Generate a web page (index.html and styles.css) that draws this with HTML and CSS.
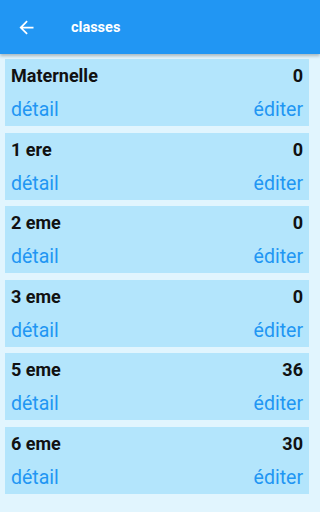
FILE: index.html
```html
<!DOCTYPE html>
<html lang="fr">
<head>
<meta charset="utf-8">
<title>classes</title>
<link rel="stylesheet" href="styles.css">
</head>
<body>
<header class="appbar">
  <svg class="back" viewBox="0 0 24 24" width="21" height="21" aria-hidden="true"><path fill="#fff" d="M20 11H7.83l5.59-5.59L12 4l-8 8 8 8 1.41-1.41L7.83 13H20v-2z"/></svg>
  <span class="title">classes</span>
</header>
<main class="list">
  <section class="card"><div class="row top"><span>Maternelle</span><span>0</span></div><div class="row links"><span>détail</span><span>éditer</span></div></section>
  <section class="card"><div class="row top"><span>1 ere</span><span>0</span></div><div class="row links"><span>détail</span><span>éditer</span></div></section>
  <section class="card"><div class="row top"><span>2 eme</span><span>0</span></div><div class="row links"><span>détail</span><span>éditer</span></div></section>
  <section class="card"><div class="row top"><span>3 eme</span><span>0</span></div><div class="row links"><span>détail</span><span>éditer</span></div></section>
  <section class="card"><div class="row top"><span>5 eme</span><span>36</span></div><div class="row links"><span>détail</span><span>éditer</span></div></section>
  <section class="card"><div class="row top"><span>6 eme</span><span>30</span></div><div class="row links"><span>détail</span><span>éditer</span></div></section>
</main>
</body>
</html>
```
FILE: styles.css
```css
html, body {
  margin: 0;
  padding: 0;
  height: 100%;
}
body {
  background: #e1f5fe;
  font-family: Roboto, "Liberation Sans", sans-serif;
  overflow: hidden;
}
.appbar {
  position: relative;
  z-index: 1;
  height: 54px;
  background: #2196f3;
  display: flex;
  align-items: center;
  box-shadow: 0 2px 3px rgba(0,0,0,0.25);
}
.back {
  margin-left: 16px;
  margin-top: 1px;
}
.title {
  margin-left: 34px;
  color: #fff;
  font-size: 14.5px;
  font-weight: 700;
  margin-top: 1px;
}
.list {
  width: 304px;
  display: flex;
  flex-direction: column;
  gap: 6.5px;
  padding: 5px 5px 0 5px;
}
.card {
  background: #b3e5fc;
  height: 67px;
  box-sizing: border-box;
  padding: 5px 6px 0 6px;
}
.row {
  display: flex;
  justify-content: space-between;
}
.top {
  font-size: 18px;
  font-weight: 700;
  line-height: 24px;
  color: #111;
}
.links {
  margin-top: 10px;
  font-size: 19.5px;
  line-height: 24px;
  color: #2196f3;
}
```
